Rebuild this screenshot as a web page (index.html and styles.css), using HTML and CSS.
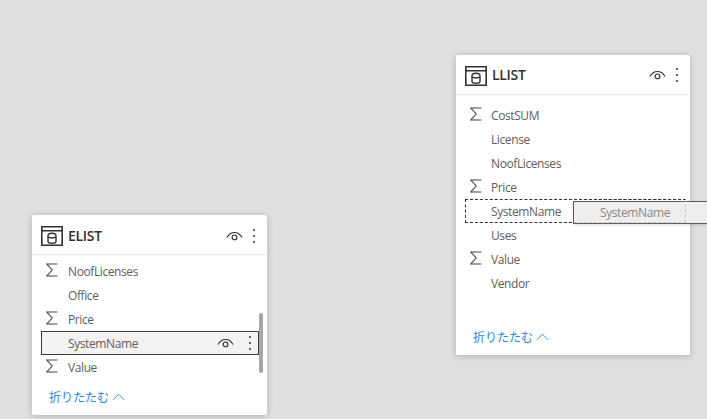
FILE: index.html
```html
<!DOCTYPE html>
<html lang="ja">
<head>
    <meta charset="UTF-8">
    <title>Model view</title>
    <link rel="stylesheet" href="styles.css">
</head>
<body>
    <svg class="defs" width="0" height="0">
        <symbol id="table" viewBox="0 0 22 20">
            <path d="M.8.8h20.400v18.400H.8zM.8 4.800h20.400" fill="none" stroke="#323130" stroke-width="1.600"/>
            <path d="M7 9.500c0-3 8-3 8 0v6c0 2.400-8 2.400-8 0zM7 10.800c1.500 1.500 6.500 1.500 8 0" fill="none" stroke="#323130" stroke-width="1.400"/>
        </symbol>
        <symbol id="eye" viewBox="0 0 18 12">
            <path d="M1 7.500C5 .5 13 .5 17 7.500" fill="none" stroke="#323130" stroke-width="1.200"/>
            <circle cx="9" cy="7.500" r="2.500" fill="none" stroke="#323130" stroke-width="1.200"/>
        </symbol>
        <symbol id="sigma" viewBox="0 0 12 14">
            <path d="M11.500 1H.8l5.400 6-5.400 6h10.700" fill="none" stroke="#484644" stroke-width="1.100"/>
        </symbol>
    </svg>

    <div class="card card-elist">
        <div class="card-head">
            <svg class="table-icon"><use href="#table"/></svg>
            <span class="card-title">ELIST</span>
            <svg class="eye"><use href="#eye"/></svg>
            <span class="dots"><i></i><i></i><i></i></span>
        </div>
        <div class="fields fields-short">
            <div class="field"><svg class="sigma"><use href="#sigma"/></svg><span>NoofLicenses</span></div>
            <div class="field"><span>Office</span></div>
            <div class="field"><svg class="sigma"><use href="#sigma"/></svg><span>Price</span></div>
            <div class="field field-hover">
                <span>SystemName</span>
                <svg class="eye"><use href="#eye"/></svg>
                <span class="dots"><i></i><i></i><i></i></span>
            </div>
            <div class="field"><svg class="sigma"><use href="#sigma"/></svg><span>Value</span></div>
            <div class="scrollbar"></div>
        </div>
        <div class="collapse">折りたたむ <svg class="chevron" viewBox="0 0 14 8"><path d="M1 7l6-6 6 6" fill="none" stroke="#2b88d8" stroke-width="1"/></svg></div>
    </div>

    <div class="card card-llist">
        <div class="card-head">
            <svg class="table-icon"><use href="#table"/></svg>
            <span class="card-title">LLIST</span>
            <svg class="eye"><use href="#eye"/></svg>
            <span class="dots"><i></i><i></i><i></i></span>
        </div>
        <div class="fields fields-long">
            <div class="field"><svg class="sigma"><use href="#sigma"/></svg><span>CostSUM</span></div>
            <div class="field"><span>License</span></div>
            <div class="field"><span>NoofLicenses</span></div>
            <div class="field"><svg class="sigma"><use href="#sigma"/></svg><span>Price</span></div>
            <div class="field field-drop"><span>SystemName</span></div>
            <div class="field"><span>Uses</span></div>
            <div class="field"><svg class="sigma"><use href="#sigma"/></svg><span>Value</span></div>
            <div class="field"><span>Vendor</span></div>
        </div>
        <div class="collapse">折りたたむ <svg class="chevron" viewBox="0 0 14 8"><path d="M1 7l6-6 6 6" fill="none" stroke="#2b88d8" stroke-width="1"/></svg></div>
    </div>

    <div class="drag-ghost"><span>SystemName</span></div>
    <div class="drag-outline"></div>
</body>
</html>
```

FILE: styles.css
```css
html, body {
    margin: 0;
    height: 100%;
}

body {
    position: relative;
    overflow: hidden;
    width: 707px;
    height: 419px;
    background: #e1dfdd;
    font-family: "Open Sans", "Noto Sans CJK JP", sans-serif;
    font-size: 12px;
    color: #605e5c;
}

.defs {
    position: absolute;
}

.card {
    position: absolute;
    box-sizing: border-box;
    display: flex;
    flex-direction: column;
    background: #fff;
    border-radius: 2px;
    box-shadow: 0 1px 6px rgba(0, 0, 0, .22);
}

.card-elist {
    left: 32px;
    top: 215px;
    width: 235px;
    height: 200px;
}

.card-llist {
    left: 456px;
    top: 55px;
    width: 234px;
    height: 300px;
}

.card-head {
    box-sizing: border-box;
    display: flex;
    align-items: center;
    height: 40px;
    padding: 0 12px 0 9px;
    border-bottom: 1px solid #edebe9;
    flex-shrink: 0;
}

.card-elist .card-head {
    padding-top: 2px;
}

.table-icon {
    width: 22px;
    height: 20px;
    margin: 2px 5px 0 0;
}

.card-elist .table-icon {
    margin-top: 0;
}

.card-title {
    flex: 1;
    font-size: 14px;
    font-weight: 600;
    color: #323130;
    letter-spacing: -.3px;
}

.eye {
    width: 17px;
    height: 12px;
}

.dots {
    display: flex;
    flex-direction: column;
    gap: 4px;
    margin-left: 10px;
    width: 2px;
}

.dots i {
    width: 2px;
    height: 2px;
    border-radius: 50%;
    background: #323130;
}

.fields {
    position: relative;
    flex: 1;
}

.fields-short {
    padding-top: 4px;
}

.fields-long {
    padding-top: 8px;
}

.field {
    box-sizing: border-box;
    display: flex;
    align-items: center;
    height: 24px;
    padding-left: 35px;
    position: relative;
    letter-spacing: -.4px;
}

.card-elist .field {
    padding-left: 36px;
}

.sigma {
    position: absolute;
    left: 14px;
    top: 4px;
    width: 12px;
    height: 14px;
}

.card-elist .field-hover {
    margin: 0 8px 0 9px;
    padding-left: 26px;
    background: #f3f2f1;
    border: 1px solid #3b3a39;
}

.field-hover span:first-child {
    flex: 1;
}

.field-hover .dots {
    margin: 0 7px 0 15px;
}

.field-hover .eye {
    margin-top: -1px;
}

.field-drop {
    margin: 0 4px 0 9px;
    padding-left: 25px;
    border: 1px dashed #323130;
}

.scrollbar {
    position: absolute;
    right: 4px;
    top: 58px;
    width: 4px;
    height: 60px;
    background: #a8a6a4;
    border-radius: 2px;
}

.collapse {
    display: flex;
    align-items: center;
    gap: 3px;
    padding: 0 0 9px 17px;
    color: #2b88d8;
    font-size: 12px;
}

.chevron {
    width: 13px;
    height: 8px;
}

.drag-ghost {
    position: absolute;
    left: 573px;
    top: 201px;
    width: 134px;
    height: 23px;
    box-sizing: border-box;
    display: flex;
    align-items: center;
    padding-left: 26px;
    background: #efeeed;
    border: 1px solid #605e5c;
    border-right: 0;
    color: #8a8886;
    letter-spacing: -.4px;
    box-shadow: 0 1px 2px rgba(0, 0, 0, .15);
}

.drag-outline {
    position: absolute;
    left: 574px;
    top: 199px;
    width: 111px;
    height: 22px;
    border-top: 1px dashed #323130;
    border-right: 1px dashed #c8c6c4;
    border-bottom: 1px dashed #c8c6c4;
}
```
